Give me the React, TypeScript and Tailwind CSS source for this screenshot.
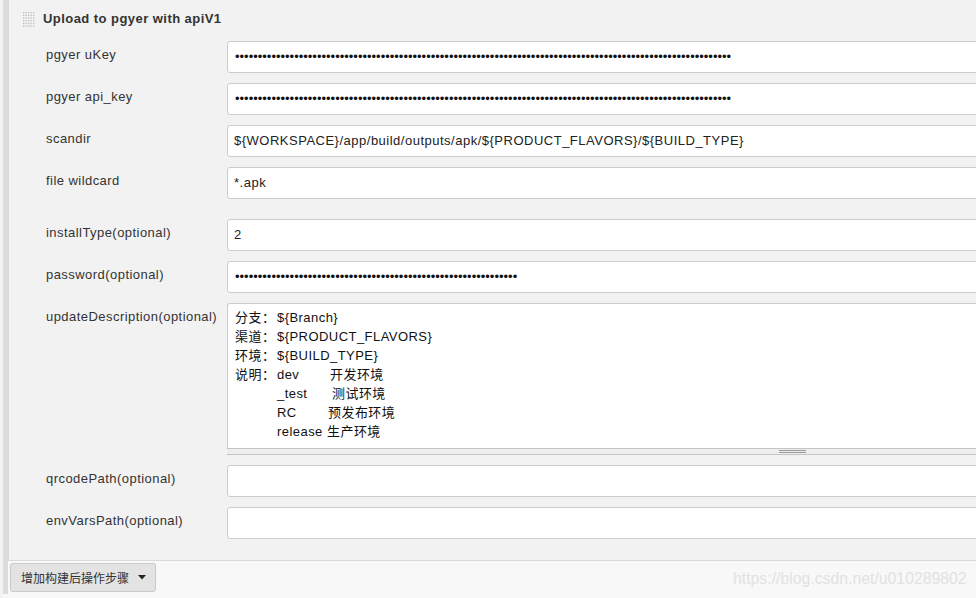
import React from "react";

const Handle = () => (
  <svg width="13" height="17" viewBox="0 0 13 17" className="shrink-0">
    {Array.from({ length: 6 }).map((_, r) =>
      Array.from({ length: 5 }).map((_, c) => (
        <rect key={`${r}-${c}`} x={1 + c * 2.5} y={1 + r * 2.7} width="1.3" height="1.3" fill="#bdbdbd" />
      ))
    )}
  </svg>
);

const Row = ({ label, children, extra = "" }: { label: string; children: React.ReactNode; extra?: string }) => (
  <div className={`flex items-start ${extra}`}>
    <div className="w-[181px] shrink-0 pt-[6px] leading-[16px] text-[13px] tracking-[0.45px] text-[#333]">{label}</div>
    <div className="flex-1 min-w-0">{children}</div>
  </div>
);

const Field = ({ value }: { value: string }) => (
  <div className="h-[32px] bg-white border border-[#cccccc] rounded-[3px] flex items-center pl-[6px] text-[13px] tracking-[0.5px] text-[#222] whitespace-nowrap overflow-hidden">
    {value}
  </div>
);

const Dots = ({ n }: { n: number }) => (
  <div className="h-[32px] bg-white border border-[#cccccc] rounded-[3px] flex items-center pl-[7px] text-[13px] text-[#111] whitespace-nowrap overflow-hidden">
    {"•".repeat(n)}
  </div>
);

const DescLine = ({ pre, val, zh, w }: { pre: string; val: string; zh: string; w: number }) => (
  <div className="whitespace-nowrap">
    <span className="inline-block w-[42px]">{pre}</span>
    <span className="inline-block" style={{ width: w }}>{val}</span>
    <span>{zh}</span>
  </div>
);

export default function App() {
  return (
    <div className="w-[976px] h-[598px] overflow-hidden bg-[#f8f8f8] flex relative font-['Liberation_Sans','Noto_Sans_CJK_SC',sans-serif]">
      <div className="w-[3px] shrink-0 bg-[#f3f3f3]" />
      <div className="w-[5px] shrink-0 h-[594px] bg-[#dcdcdc]" />
      <div className="flex-1 min-w-0 flex flex-col">
        <div className="w-[1250px] h-[561px] bg-[#f2f2f2] border-l border-b border-[#dadada]">
          <div className="h-[38px] flex items-center pl-[13px] gap-[8px]">
            <Handle />
            <span className="text-[13px] font-bold tracking-[0.45px] text-[#333]">Upload to pgyer with apiV1</span>
          </div>
          <div className="mt-[3px] pl-[37px] flex flex-col gap-[10px]">
            <Row label="pgyer uKey"><Dots n={109} /></Row>
            <Row label="pgyer api_key"><Dots n={109} /></Row>
            <Row label="scandir"><Field value="${WORKSPACE}/app/build/outputs/apk/${PRODUCT_FLAVORS}/${BUILD_TYPE}" /></Row>
            <Row label="file wildcard"><Field value="*.apk" /></Row>
            <Row label="installType(optional)" extra="mt-[10px]"><Field value="2" /></Row>
            <Row label="password(optional)"><Dots n={62} /></Row>
            <Row label="updateDescription(optional)">
              <div className="flex flex-col">
                <div className="h-[145px] bg-white border border-b-0 border-[#cccccc] rounded-t-[3px] pt-[4px] pl-[7px] text-[13px] tracking-[0.45px] leading-[19px] text-[#111]">
                  <div className="whitespace-nowrap"><span className="inline-block w-[42px]">分支：</span>{"${Branch}"}</div>
                  <div className="whitespace-nowrap"><span className="inline-block w-[42px]">渠道：</span>{"${PRODUCT_FLAVORS}"}</div>
                  <div className="whitespace-nowrap"><span className="inline-block w-[42px]">环境：</span>{"${BUILD_TYPE}"}</div>
                  <DescLine pre="说明：" val="dev" zh="开发环境" w={53} />
                  <DescLine pre="" val="_test" zh="测试环境" w={55} />
                  <DescLine pre="" val="RC" zh="预发布环境" w={51} />
                  <DescLine pre="" val="release" zh="生产环境" w={50} />
                </div>
                <div className="h-[7px] bg-[#eeeeee] border-t border-b border-[#c4c4c4] flex items-center pl-[552px]">
                  <div className="w-[27px] h-[3px] border-t border-b border-[#999]" />
                </div>
              </div>
            </Row>
            <Row label="qrcodePath(optional)"><Field value="" /></Row>
            <Row label="envVarsPath(optional)"><Field value="" /></Row>
          </div>
        </div>
        <div className="ml-[2px] mt-[2px]">
          <button className="h-[29px] pl-[10px] pr-[9px] flex items-center gap-[9px] text-[12px] text-[#333] bg-[#e3e3e3] border border-[#c9c9c9] rounded-[3px] font-['Noto_Sans_CJK_SC',sans-serif]">
            <span>增加构建后操作步骤</span>
            <svg width="8" height="5" viewBox="0 0 8 5"><path d="M0 0H8L4 4.5Z" fill="#222" /></svg>
          </button>
        </div>
      </div>
      <div className="absolute left-[733px] top-[570px] text-[15.8px] leading-[18px] text-[#e2e2e2] whitespace-nowrap">
        https://blog.csdn.net/u010289802
      </div>
    </div>
  );
}
